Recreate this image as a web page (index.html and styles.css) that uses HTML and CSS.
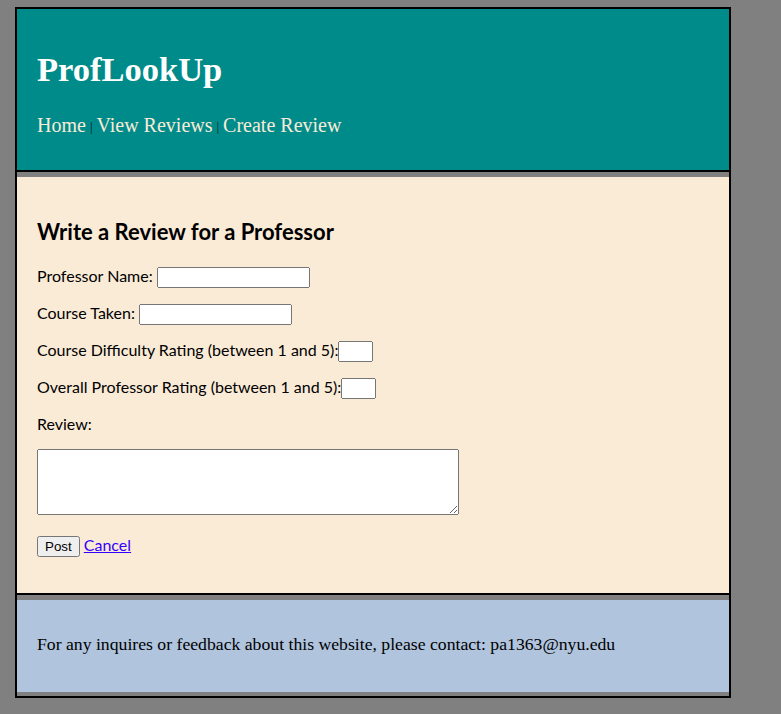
FILE: index.html
```html
<!DOCTYPE html>
<html lang="en">
<head>
<meta charset="utf-8">
<title>ProfLookUp</title>
<link rel="stylesheet" href="styles.css">
</head>
<body>
<div class="page">
  <header class="site-header">
    <h1 class="brand">ProfLookUp</h1>
    <nav class="nav">
      <a href="#" class="nav-link">Home</a><span class="sep">|</span><a href="#" class="nav-link">View Reviews</a><span class="sep">|</span><a href="#" class="nav-link">Create Review</a>
    </nav>
  </header>
  <main class="content">
    <h2 class="title">Write a Review for a Professor</h2>
    <form class="review-form">
      <p class="row">Professor Name: <input type="text" class="text-input"></p>
      <p class="row">Course Taken: <input type="text" class="text-input"></p>
      <p class="row">Course Difficulty Rating (between 1 and 5):<input type="text" class="num-input"></p>
      <p class="row">Overall Professor Rating (between 1 and 5):<input type="text" class="num-input"></p>
      <p class="row">Review:</p>
      <p class="row"><textarea class="review-text"></textarea></p>
      <p class="row actions"><button type="button" class="post-btn">Post</button> <a href="#" class="cancel">Cancel</a></p>
    </form>
  </main>
  <footer class="site-footer">
    <p class="footer-text">For any inquires or feedback about this website, please contact: pa1363@nyu.edu</p>
  </footer>
</div>
</body>
</html>
```
FILE: styles.css
```css
html, body {
  margin: 0;
  padding: 0;
  background: #808080;
}
body {
  padding: 7px 0 0 15px;
}
.page {
  width: 712px;
  border: 2px solid #000;
  background: #808080;
}
.site-header {
  background: #008b8b;
  border-bottom: 2px solid #000;
  margin-bottom: 5px;
  padding: 40px 20px 32px;
}
.brand {
  margin: 0;
  font-family: "Liberation Serif", serif;
  font-size: 34.5px;
  font-weight: bold;
  line-height: 40px;
  color: #fff;
}
.nav {
  margin-top: 25px;
  font-family: "Liberation Serif", serif;
  font-size: 20px;
  line-height: 23px;
}
.nav-link {
  color: #faebd7;
  text-decoration: none;
}
.sep {
  color: #022;
  font-size: 13px;
  margin: 0 4px;
  vertical-align: 1px;
}
.content {
  display: block;
  background: #faebd7;
  border-bottom: 2px solid #000;
  margin-bottom: 5px;
  padding: 41px 20px 22px;
  font-family: Lato, "Open Sans", sans-serif;
  font-size: 16px;
  color: #000;
}
.title {
  margin: 0 0 20px;
  font-size: 22px;
  font-weight: bold;
}
.review-form {
  margin: 0;
}
.row {
  margin: 14px 0;
  line-height: 22px;
}
.actions {
  margin-top: 19px;
}
.text-input {
  box-sizing: border-box;
  width: 153px;
  height: 21px;
  font-family: Arial, "Liberation Sans", sans-serif;
}
.num-input {
  box-sizing: border-box;
  width: 35px;
  height: 21px;
  font-family: Arial, "Liberation Sans", sans-serif;
}
.review-text {
  box-sizing: border-box;
  width: 422px;
  height: 66px;
  vertical-align: bottom;
}
.post-btn {
  font-family: "Liberation Sans", Arial, sans-serif;
  font-size: 13.33px;
}
.cancel {
  color: #3300ff;
}
.site-footer {
  background: #b0c4de;
  margin-bottom: 4px;
  padding: 35px 20px 39px;
}
.footer-text {
  margin: 0;
  font-family: "Liberation Serif", serif;
  font-size: 17.7px;
  line-height: 18px;
  color: #000;
}
```
